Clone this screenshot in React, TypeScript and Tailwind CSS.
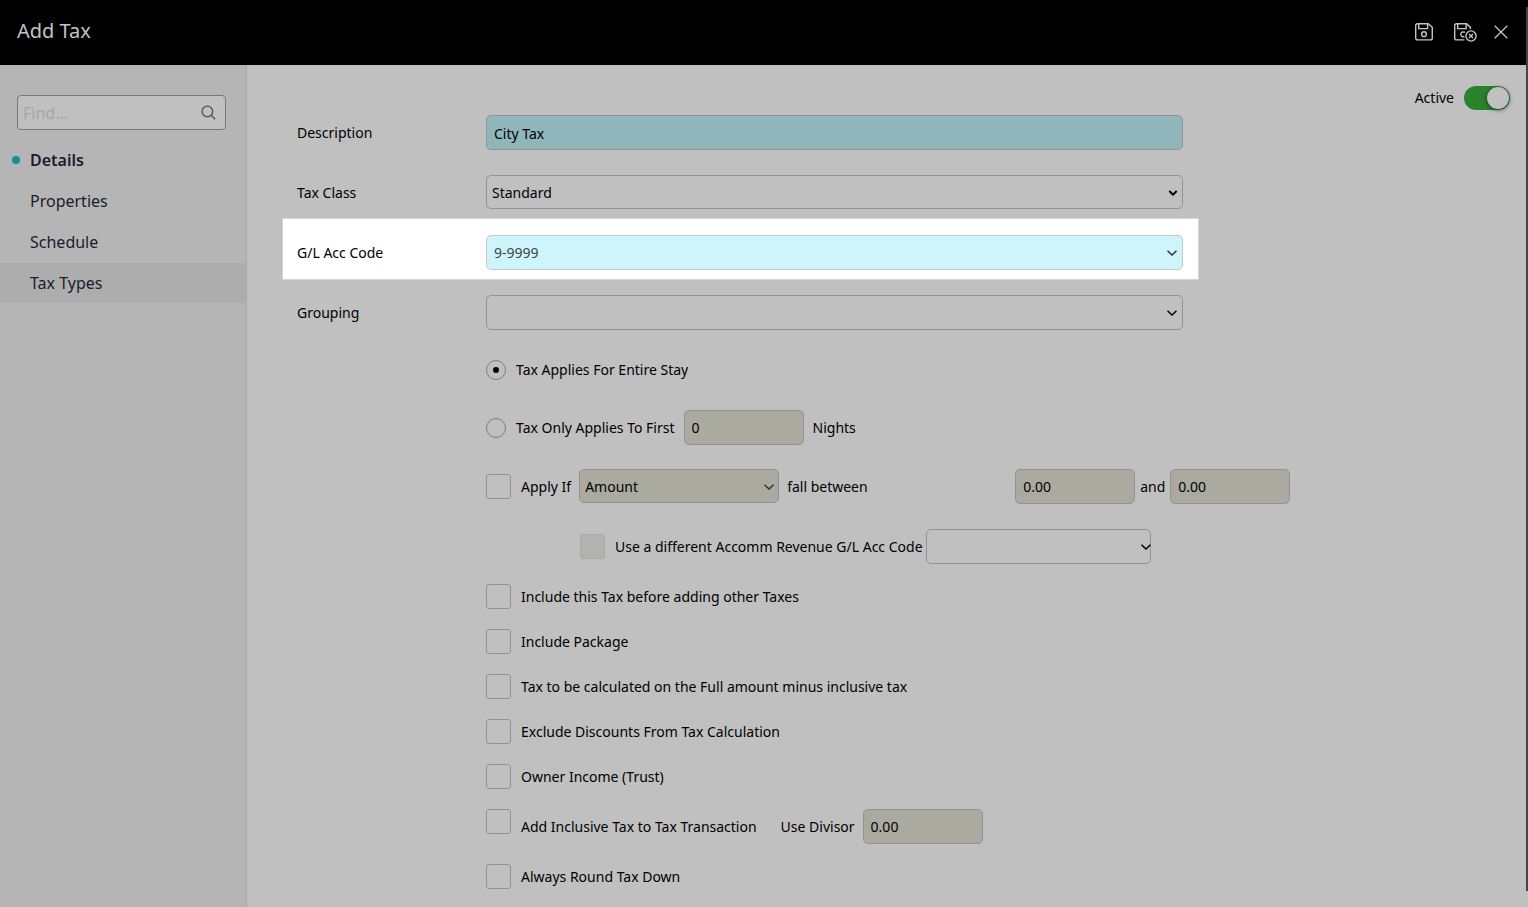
import * as React from 'react';
import clsx from 'clsx';


const FIELD = 'h-[35px] rounded-[5px] border border-[#939393] px-[7px] text-sm text-black outline-none';
const MUTED = 'bg-[#aaaaa1]';

interface SelectProps {
    id?: string
    label?: string
    options: string[]
    className?: string
    wrapperClassName?: string
    chevronClassName?: string
    bold?: boolean
}

const Select: React.FC<SelectProps> = ({ id, label, options, className, wrapperClassName, chevronClassName, bold }) => {
    return (
        <div className={clsx('relative', wrapperClassName)}>
            <select id={id} aria-label={label} className={clsx('block w-full appearance-none rounded-[5px] border text-sm outline-none', className)}>
                {options.map((option) => <option key={option}>{option}</option>)}
            </select>

            <svg
                viewBox="0 0 10 6"
                className={clsx('pointer-events-none absolute top-[15px] h-[6px] w-[10px] fill-none', chevronClassName)}
                strokeWidth={bold ? 2 : 1.5}
            >
                {bold ? <path d="M1.3 1 L5 4.6 L8.7 1" /> : <path d="M0.5 0.7 L5 5 L9.5 0.7" />}
            </svg>
        </div>
    );
}

interface RowProps {
    id: string
    label: string
    highlighted?: boolean
    children: React.ReactNode
}

const Row: React.FC<RowProps> = ({ id, label, highlighted, children }) => {
    return (
        <div className={clsx('flex h-[60px] items-start pt-4 pr-[15px] pl-[14px]', highlighted && 'bg-white ring-1 ring-[#d6d6d6]')}>
            <label htmlFor={id} className="w-[189px] shrink-0 leading-[35px]">{label}</label>
            {children}
        </div>
    );
}

interface CheckProps {
    label: string
    disabled?: boolean
    className?: string
}

const Check: React.FC<CheckProps> = ({ label, disabled, className }) => {
    return (
        <label className={clsx('flex shrink-0 items-center gap-[10px]', className)}>
            <input
                type="checkbox"
                disabled={disabled}
                className={clsx(
                    'size-[25px] shrink-0 appearance-none rounded-[3px] border checked:bg-[#128a90]',
                    disabled ? 'border-[#a9a9a9] bg-[#b3b3ae]' : 'border-[#939393]',
                )}
            />
            {label}
        </label>
    );
}

interface RadioProps {
    label: string
    defaultChecked?: boolean
}

const Radio: React.FC<RadioProps> = ({ label, defaultChecked }) => {
    return (
        <label className="flex items-center gap-[10px]">
            <input
                type="radio"
                name="applies"
                defaultChecked={defaultChecked}
                className="grid size-5 appearance-none place-content-center rounded-full border border-[#7d7d7d] before:size-[6px] before:rounded-full checked:before:bg-black"
            />
            {label}
        </label>
    );
}

const SaveIcon = () => (
    <svg viewBox="0 0 20 20" className="size-5 fill-none stroke-[#c4c4c4]" strokeWidth="1.4">
        <path d="M3.6 1.7 H14.2 L18.3 5.2 V16 Q18.3 17.9 16.4 17.9 H3.6 Q1.7 17.9 1.7 16 V3.6 Q1.7 1.7 3.6 1.7 Z" />
        <path d="M4.7 1.9 V6.6 H13.6 V1.9" />
        <circle cx="10" cy="12.2" r="2.4" />
    </svg>
);

const SaveCloseIcon = () => (
    <svg viewBox="0 0 24 20" className="h-5 w-6 fill-none stroke-[#c4c4c4]" strokeWidth="1.4">
        <path d="M11.4 17.9 H3.6 Q1.7 17.9 1.7 16 V3.6 Q1.7 1.7 3.6 1.7 H13.6 L17.4 5.4 V7.2" />
        <path d="M4.7 1.9 V6.6 H13.2 V1.9" />
        <path d="M12 10.2 Q8 9.2 7.8 12.2 Q8 15.2 11.4 14.6" />
        <circle cx="18" cy="14" r="5.1" />
        <path d="M16 12 L20 16 M20 12 L16 16" />
    </svg>
);

const CloseIcon = () => (
    <svg viewBox="0 0 14 14" className="size-[14px] fill-none stroke-[#c4c4c4]" strokeWidth="1.3">
        <path d="M0.7 0.7 L13.3 13.3 M13.3 0.7 L0.7 13.3" />
    </svg>
);

const Header = () => {
    return (
        <header className="flex h-[65px] shrink-0 items-center justify-between bg-black pr-5 pl-[17px]">
            <h1 className="pb-1 text-xl text-[#c4c4c4]">Add Tax</h1>

            <div className="flex items-center pb-px">
                <button type="button" aria-label="Save" className="mr-[19px]"><SaveIcon /></button>
                <button type="button" aria-label="Save and close" className="mr-[17px]"><SaveCloseIcon /></button>
                <button type="button" aria-label="Close"><CloseIcon /></button>
            </div>
        </header>
    );
}

const NAV = ['Details', 'Properties', 'Schedule', 'Tax Types'];

const Sidebar = () => {
    return (
        <aside className="w-[247px] shrink-0 border-r border-[#a9a9a9] bg-[#b5b5b5] pt-[30px] text-base">
            <div className="mr-5 ml-[17px] flex h-[35px] items-center rounded border border-[#777777] bg-[#c0c0c0] pr-[9px] pl-[5px]">
                <input
                    type="text"
                    aria-label="Find"
                    placeholder="Find..."
                    className="w-full min-w-0 bg-transparent outline-none placeholder:text-[#a6a6a6]"
                />
                <svg viewBox="0 0 15 15" className="size-[15px] shrink-0 fill-none stroke-[#555555]" strokeWidth="1.4">
                    <circle cx="6.4" cy="6.4" r="5.3" />
                    <path d="M10.2 10.2 L14.2 14.2" />
                </svg>
            </div>

            <nav className="mt-[10px] flex flex-col gap-px">
                {NAV.map((item) => (
                    <a
                        key={item}
                        href="#"
                        className={clsx(
                            'flex h-10 items-center gap-[10px] pl-3 text-[#1b1b2b]',
                            item === 'Details' && 'font-semibold',
                            item === 'Tax Types' && 'bg-[#adadad]',
                        )}
                    >
                        <span className={clsx('size-2 rounded-full', item === 'Details' && 'bg-[#128f96]')} />
                        {item}
                    </a>
                ))}
            </nav>
        </aside>
    );
}

const CHECKS = [
    'Include this Tax before adding other Taxes',
    'Include Package',
    'Tax to be calculated on the Full amount minus inclusive tax',
    'Exclude Discounts From Tax Calculation',
    'Owner Income (Trust)',
];

const Form = () => {
    return (
        <form className="pl-9 text-sm text-black">
            <div className="max-w-[915px]">
                <Row id="description" label="Description">
                    <input id="description" type="text" defaultValue="City Tax" className={clsx(FIELD, 'w-full bg-[#90b6bb] pt-px')} />
                </Row>

                <Row id="tax-class" label="Tax Class">
                    <Select
                        id="tax-class"
                        options={['Standard']}
                        bold
                        wrapperClassName="w-full"
                        className="h-[34px] border-[#939393] px-[5px] pt-px"
                        chevronClassName="right-[5px] stroke-black"
                    />
                </Row>

                <Row id="gl-code" label="G/L Acc Code" highlighted>
                    <Select
                        id="gl-code"
                        options={['9-9999']}
                        wrapperClassName="w-full"
                        className="h-[35px] border-[#c8c8c8] bg-[#cef5fb] px-[7px] text-[#444444]"
                        chevronClassName="right-[6px] stroke-[#333333]"
                    />
                </Row>

                <Row id="grouping" label="Grouping">
                    <Select
                        id="grouping"
                        options={['']}
                        wrapperClassName="w-full"
                        className="h-[35px] border-[#939393] px-[7px]"
                        chevronClassName="right-[6px] stroke-black"
                    />
                </Row>
            </div>

            <div className="mt-[13px] pb-[18px] pl-[203px]">
                <div className="flex h-[35px] items-center">
                    <Radio label="Tax Applies For Entire Stay" defaultChecked />
                </div>

                <div className="mt-[23px] flex h-[35px] items-center gap-[9px]">
                    <Radio label="Tax Only Applies To First" />
                    <input id="nights" type="text" defaultValue="0" className={clsx(FIELD, MUTED, 'w-[120px]')} />
                    <label htmlFor="nights">Nights</label>
                </div>

                <div className="mt-6 flex h-[35px] items-start leading-[35px]">
                    <Check label="Apply If" />
                    <Select
                        label="Apply by"
                        options={['Amount']}
                        wrapperClassName="ml-2 w-[200px] shrink-0"
                        className={clsx(MUTED, 'h-[34px] border-[#939393] px-[5px] pt-px leading-5')}
                        chevronClassName="right-[5px] stroke-[#333333]"
                    />
                    <label htmlFor="from" className="ml-2 w-[228px]">fall between</label>
                    <input id="from" type="text" defaultValue="0.00" className={clsx(FIELD, MUTED, 'w-[120px]')} />
                    <label htmlFor="to" className="mx-[5px]">and</label>
                    <input id="to" type="text" defaultValue="0.00" className={clsx(FIELD, MUTED, 'w-[120px]')} />
                </div>

                <div className="mt-[25px] flex h-[35px] items-center gap-[3px] pl-[94px]">
                    <Check label="Use a different Accomm Revenue G/L Acc Code" disabled />
                    <Select
                        label="Accomm Revenue G/L Acc Code"
                        options={['']}
                        wrapperClassName="w-[225px]"
                        className="h-[35px] border-[#939393] px-[7px]"
                        chevronClassName="right-0 stroke-black"
                    />
                </div>

                <div className="mt-5 flex flex-col items-start gap-5">
                    {CHECKS.map((label) => <Check key={label} label={label} />)}

                    <div className="flex items-start">
                        <input
                            id="inclusive"
                            type="checkbox"
                            className="size-[25px] shrink-0 appearance-none rounded-[3px] border border-[#939393] checked:bg-[#128a90]"
                        />
                        <label htmlFor="inclusive" className="ml-[10px] leading-[35px]">Add Inclusive Tax to Tax Transaction</label>
                        <label htmlFor="divisor" className="ml-6 leading-[35px]">Use Divisor</label>
                        <input id="divisor" type="text" defaultValue="0.00" className={clsx(FIELD, MUTED, 'ml-2 w-[120px]')} />
                    </div>

                    <Check label="Always Round Tax Down" />
                </div>
            </div>
        </form>
    );
}

export default function App() {
    return (
        <div className="relative flex min-h-screen flex-col bg-[#c0c0c0] font-['Noto_Sans',sans-serif]">
            <Header />

            <div className="flex flex-1">
                <Sidebar />

                <main className="min-w-0 flex-1">
                    <div className="mb-px flex h-[33px] items-end justify-end pr-[18px]">
                        <label className="flex h-0 items-center gap-[10px] text-sm text-black">
                            Active
                            <input
                                type="checkbox"
                                role="switch"
                                defaultChecked
                                className="flex h-6 w-[46px] appearance-none items-center rounded-full bg-[#888888] p-px before:size-[22px] before:rounded-full before:bg-[#c0c0c0] before:shadow-[0_1px_4px_rgba(0,0,0,0.6)] checked:justify-end checked:bg-[#2a822c]"
                            />
                        </label>
                    </div>

                    <Form />
                </main>
            </div>

            <div className="absolute top-[7px] right-0 bottom-4 w-[2px] bg-[#444444]" />
        </div>
    );
}
